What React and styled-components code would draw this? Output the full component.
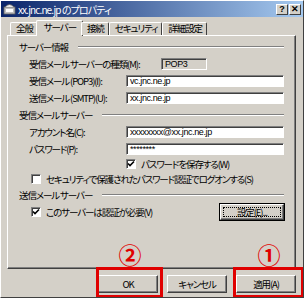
import React from "react";
import styled, { createGlobalStyle } from "styled-components";

const GlobalStyle = createGlobalStyle`
  html, body {
    margin: 0;
    padding: 0;
    background: #ffffff;
  }
`;

const Window = styled.div`
  position: relative;
  width: 304px;
  height: 298px;
  box-sizing: border-box;
  background: #d4d0c8;
  border-top: 1px solid #ffffff;
  border-left: 1px solid #ffffff;
  border-right: 1px solid #404040;
  border-bottom: 1px solid #404040;
  display: flex;
  flex-direction: column;
  overflow: hidden;
  font-family: "Noto Sans CJK JP", sans-serif;
  font-feature-settings: "palt";
  font-size: 9.5px;
  letter-spacing: -1.1px;
  color: #000000;
`;

const TitleBar = styled.div`
  height: 16px;
  display: flex;
  align-items: center;
  padding: 0 2px 0 2px;
  background: linear-gradient(to right, #0a246a, #a6caf0);
  color: #ffffff;
  font-size: 10px;
`;

const Title = styled.span`
  flex: 1;
  margin-left: 2px;
  letter-spacing: -0.9px;
`;

const CaptionButton = styled.div`
  width: 12px;
  height: 11px;
  box-sizing: border-box;
  margin-left: 1px;
  background: #d4d0c8;
  border-top: 1px solid #ffffff;
  border-left: 1px solid #ffffff;
  border-right: 1px solid #404040;
  border-bottom: 1px solid #404040;
  display: flex;
  align-items: center;
  justify-content: center;
  color: #000;
  font-family: "Liberation Sans", sans-serif;
  font-weight: bold;
  font-size: 9px;
  letter-spacing: 0;
  line-height: 1;
`;

const Body = styled.div`
  flex: 1;
  display: flex;
  flex-direction: column;
  padding: 3px 7px 0 6px;
`;

const TabRow = styled.div`
  display: flex;
  align-items: flex-end;
  height: 15px;
  padding-left: 3px;
  position: relative;
  z-index: 1;
`;

const Tab = styled.div`
  box-sizing: border-box;
  height: ${(p) => (p.$active ? "16px" : "13px")};
  margin: ${(p) => (p.$active ? "0 -2px -1px -2px" : "0")};
  padding: 0 ${(p) => (p.$active ? "6px" : "4px")} 0 ${(p) => (p.$active ? "7px" : "5px")};
  background: #d4d0c8;
  border-top: 1px solid #ffffff;
  border-left: 1px solid #ffffff;
  border-right: 1px solid #404040;
  border-radius: 2px 2px 0 0;
  display: flex;
  align-items: center;
  line-height: 1;
  padding-bottom: ${(p) => (p.$active ? "2px" : "0")};
`;

const Panel = styled.div`
  height: 234px;
  box-sizing: border-box;
  border-top: 1px solid #ffffff;
  border-left: 1px solid #ffffff;
  border-right: 1px solid #404040;
  border-bottom: 1px solid #404040;
  box-shadow: inset -1px -1px 0 #808080;
  padding: 3px 11px 0 11px;
  display: flex;
  flex-direction: column;
`;

const GroupHeader = styled.div`
  height: ${(p) => p.$h || 16}px;
  display: flex;
  align-items: center;
  gap: 10px;
  white-space: nowrap;
`;

const Rule = styled.div`
  flex: 1;
  height: 0;
  border-top: 1px solid #808080;
  border-bottom: 1px solid #ffffff;
`;

const Row = styled.div`
  height: ${(p) => p.$h || 17}px;
  display: flex;
  align-items: center;
  white-space: nowrap;
  padding-left: ${(p) => p.$indent ?? 10}px;
`;

const Label = styled.span`
  width: ${(p) => p.$w}px;
  flex: none;
  white-space: nowrap;
`;

const TextBox = styled.div`
  flex: 1;
  height: 12px;
  box-sizing: border-box;
  background: ${(p) => (p.$readonly ? "#d4d0c8" : "#ffffff")};
  border-top: 1px solid #808080;
  border-left: 1px solid #808080;
  border-right: 1px solid #ffffff;
  border-bottom: 1px solid #ffffff;
  box-shadow: inset 1px 1px 0 #404040;
  display: flex;
  align-items: center;
  padding-left: 3px;
  font-family: "Liberation Sans", sans-serif;
  font-size: 9px;
  letter-spacing: -0.4px;
  white-space: nowrap;
  overflow: hidden;
  ${(p) => (p.$width ? `flex: none; width: ${p.$width}px;` : "")}
`;

const CheckBox = styled.div`
  width: 10px;
  height: 10px;
  flex: none;
  box-sizing: border-box;
  background: #ffffff;
  border-top: 1px solid #808080;
  border-left: 1px solid #808080;
  border-right: 1px solid #ffffff;
  border-bottom: 1px solid #ffffff;
  box-shadow: inset 1px 1px 0 #404040;
  margin-right: 5px;
  display: flex;
  align-items: center;
  justify-content: center;
`;

const Button = styled.div`
  width: ${(p) => p.$w || 60}px;
  height: ${(p) => p.$h || 18}px;
  box-sizing: border-box;
  flex: none;
  background: #d4d0c8;
  border-top: 1px solid #ffffff;
  border-left: 1px solid #ffffff;
  border-right: 1px solid #404040;
  border-bottom: 1px solid #404040;
  box-shadow: inset -1px -1px 0 #808080;
  display: flex;
  align-items: center;
  justify-content: center;
  position: relative;
  ${(p) =>
    p.$focused
      ? `outline: 1px solid #000; &::after { content: ""; position: absolute; inset: 2px; border: 1px dotted #000; }`
      : ""}
`;

const Spacer = styled.div`
  flex: 1;
`;

const Footer = styled.div`
  display: flex;
  justify-content: flex-end;
  gap: 9px;
  padding-top: 6px;
`;

const RedFrame = styled.div`
  position: absolute;
  left: ${(p) => p.$x}px;
  top: 266px;
  width: ${(p) => p.$w}px;
  height: 31px;
  box-sizing: border-box;
  border: 3px solid #e00000;
  pointer-events: none;
`;

const Badge = styled.div`
  position: absolute;
  left: ${(p) => p.$x}px;
  top: 241px;
  width: 24px;
  height: 24px;
  display: flex;
  align-items: center;
  justify-content: center;
  color: #e00000;
  font-size: 23px;
  letter-spacing: 0;
  font-weight: bold;
  line-height: 1;
`;

const Check = () => (
  <svg width="8" height="8" viewBox="0 0 8 8">
    <path d="M1 3.5 L3 5.5 L7 1.5" stroke="#000" strokeWidth="1.6" fill="none" />
  </svg>
);

const AppIcon = () => (
  <svg width="13" height="12" viewBox="0 0 13 12">
    <rect x="1" y="4" width="11" height="7" fill="#c0c0c0" stroke="#606060" strokeWidth="0.8" />
    <path d="M2 4 Q6.5 -1 11 4" fill="#e8e8e8" stroke="#606060" strokeWidth="0.8" />
    <rect x="3" y="6" width="7" height="3" fill="#ffffff" />
  </svg>
);

const App = () => {
  return (
    <>
      <GlobalStyle />
      <Window>
        <TitleBar>
          <AppIcon />
          <Title>xx.jnc.ne.jp のプロパティ</Title>
          <CaptionButton>?</CaptionButton>
          <CaptionButton>✕</CaptionButton>
        </TitleBar>
        <Body>
          <TabRow>
            <Tab>全般</Tab>
            <Tab $active>サーバー</Tab>
            <Tab>接続</Tab>
            <Tab>セキュリティ</Tab>
            <Tab>詳細設定</Tab>
          </TabRow>
          <Panel>
            <GroupHeader>
              サーバー情報
              <Rule />
            </GroupHeader>
            <Row>
              <Label $w={132}>受信メール サーバーの種類(M):</Label>
              <TextBox $readonly $width={46}>POP3</TextBox>
            </Row>
            <Row>
              <Label $w={97}>受信メール (POP3)(I):</Label>
              <TextBox>vc.jnc.ne.jp</TextBox>
            </Row>
            <Row>
              <Label $w={97}>送信メール (SMTP)(U):</Label>
              <TextBox>xx.jnc.ne.jp</TextBox>
            </Row>
            <GroupHeader $h={17}>
              受信メール サーバー
              <Rule />
            </GroupHeader>
            <Row>
              <Label $w={97}>アカウント名(C):</Label>
              <TextBox>xxxxxxxx@xx.jnc.ne.jp</TextBox>
            </Row>
            <Row>
              <Label $w={97}>パスワード(P):</Label>
              <TextBox>********</TextBox>
            </Row>
            <Row $h={14} $indent={107}>
              <CheckBox>
                <Check />
              </CheckBox>
              パスワードを保存する(W)
            </Row>
            <Row $h={16} $indent={12}>
              <CheckBox />
              セキュリティで保護されたパスワード認証でログオンする(S)
            </Row>
            <GroupHeader>
              送信メール サーバー
              <Rule />
            </GroupHeader>
            <Row $h={18} $indent={12}>
              <CheckBox>
                <Check />
              </CheckBox>
              このサーバーは認証が必要(V)
              <Spacer />
              <Button $w={64} $h={16} $focused>
                設定(E)...
              </Button>
            </Row>
          </Panel>
          <Footer>
            <Button>OK</Button>
            <Button>キャンセル</Button>
            <Button>適用(A)</Button>
          </Footer>
        </Body>
        <RedFrame $x={95} $w={67} />
        <RedFrame $x={232} $w={71} />
        <Badge $x={117}>②</Badge>
        <Badge $x={256}>①</Badge>
      </Window>
    </>
  );
};

export default App;
